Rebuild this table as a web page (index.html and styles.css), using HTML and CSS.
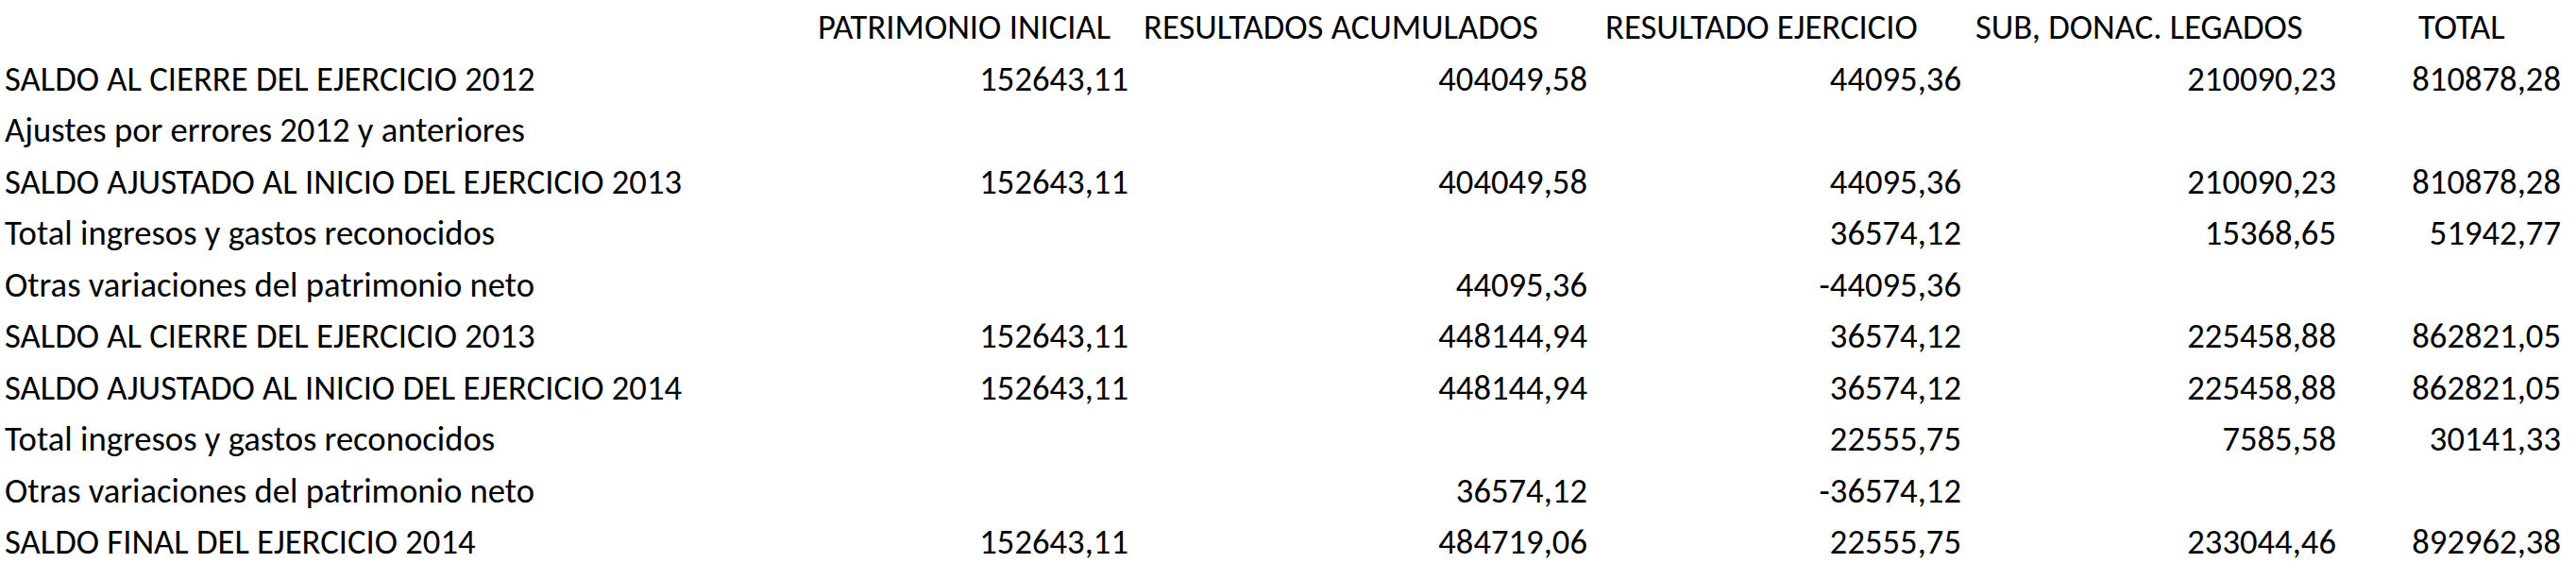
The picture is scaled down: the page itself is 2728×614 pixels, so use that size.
FILE: index.html
```html
<!DOCTYPE html>
<html lang="es">
<head>
<meta charset="utf-8">
<title>Estado de cambios en el patrimonio neto</title>
<link rel="stylesheet" href="styles.css">
</head>
<body>
<div class="sheet">
  <div class="c"></div>
  <div class="c h hb">PATRIMONIO INICIAL</div>
  <div class="c h hc">RESULTADOS ACUMULADOS</div>
  <div class="c h hd">RESULTADO EJERCICIO</div>
  <div class="c h he">SUB, DONAC. LEGADOS</div>
  <div class="c h hf">TOTAL</div>

  <div class="c l">SALDO AL CIERRE DEL EJERCICIO 2012</div>
  <div class="c n">152643,11</div><div class="c n">404049,58</div><div class="c n">44095,36</div><div class="c n">210090,23</div><div class="c n">810878,28</div>

  <div class="c l">Ajustes por errores 2012 y anteriores</div>
  <div class="c n"></div><div class="c n"></div><div class="c n"></div><div class="c n"></div><div class="c n"></div>

  <div class="c l">SALDO AJUSTADO AL INICIO DEL EJERCICIO 2013</div>
  <div class="c n">152643,11</div><div class="c n">404049,58</div><div class="c n">44095,36</div><div class="c n">210090,23</div><div class="c n">810878,28</div>

  <div class="c l">Total ingresos y gastos reconocidos</div>
  <div class="c n"></div><div class="c n"></div><div class="c n">36574,12</div><div class="c n">15368,65</div><div class="c n">51942,77</div>

  <div class="c l">Otras variaciones del patrimonio neto</div>
  <div class="c n"></div><div class="c n">44095,36</div><div class="c n">-44095,36</div><div class="c n"></div><div class="c n"></div>

  <div class="c l">SALDO AL CIERRE DEL EJERCICIO 2013</div>
  <div class="c n">152643,11</div><div class="c n">448144,94</div><div class="c n">36574,12</div><div class="c n">225458,88</div><div class="c n">862821,05</div>

  <div class="c l">SALDO AJUSTADO AL INICIO DEL EJERCICIO 2014</div>
  <div class="c n">152643,11</div><div class="c n">448144,94</div><div class="c n">36574,12</div><div class="c n">225458,88</div><div class="c n">862821,05</div>

  <div class="c l">Total ingresos y gastos reconocidos</div>
  <div class="c n"></div><div class="c n"></div><div class="c n">22555,75</div><div class="c n">7585,58</div><div class="c n">30141,33</div>

  <div class="c l">Otras variaciones del patrimonio neto</div>
  <div class="c n"></div><div class="c n">36574,12</div><div class="c n">-36574,12</div><div class="c n"></div><div class="c n"></div>

  <div class="c l">SALDO FINAL DEL EJERCICIO 2014</div>
  <div class="c n">152643,11</div><div class="c n">484719,06</div><div class="c n">22555,75</div><div class="c n">233044,46</div><div class="c n">892962,38</div>
</div>
</body>
</html>
```
FILE: styles.css
```css
html, body {
  margin: 0;
  padding: 0;
  background: #ffffff;
}

.sheet {
  display: grid;
  grid-template-columns: 860px 343px 486px 396px 397px 238px;
  grid-auto-rows: 54.5px;
  padding-top: 2px;
  font-family: Carlito, "Liberation Sans Narrow", "Liberation Sans", sans-serif;
  font-size: 36.67px;
  line-height: 54.5px;
  color: #000000;
}

.c {
  white-space: nowrap;
  overflow: visible;
}

.l {
  padding-left: 5px;
}

.n {
  text-align: right;
  padding-right: 8px;
}

.hb { padding-left: 6px; }
.hc { padding-left: 8px; }
.hd { padding-left: 11px; }
.he { padding-left: 7px; }
.hf { padding-left: 79px; }
```
